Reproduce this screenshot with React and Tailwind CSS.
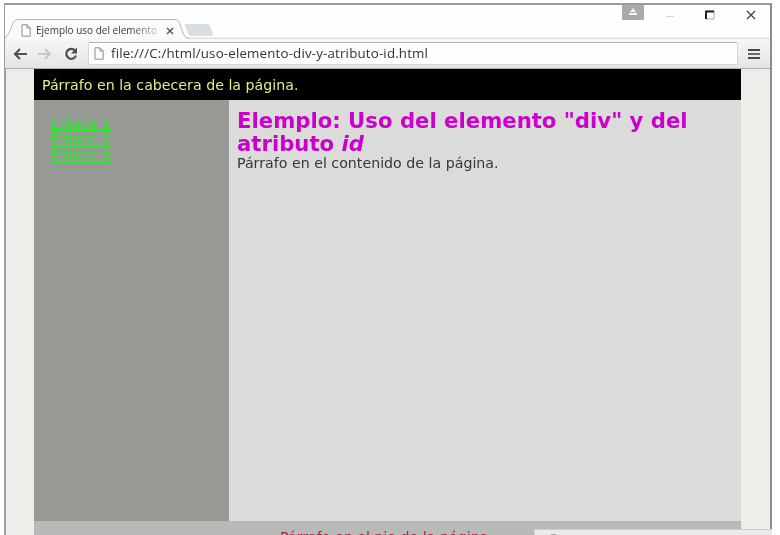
const verdana = "font-['DejaVu_Sans',Verdana,sans-serif]";

function PageIcon({ className }) {
  return (
    <svg viewBox="0 0 10 13" className={className} fill="#fdfdfd" stroke="#8b8d8c" strokeWidth="1">
      <path d="M1 .8H6L9.2 4V12.2H1Z M6 .8V4H9.2" />
    </svg>
  );
}

function TabStrip() {
  return (
    <div className="relative h-[34px] shrink-0 bg-[#fefefe]">
      <svg className="absolute left-0 top-0 h-[34px] w-[765px]" viewBox="0 0 765 34" fill="none">
        <path d="M179 19H202Q204 19 205 21L208 29Q208 31 206 31H187Q184 31 183 28Z" fill="#d9dee2" />
        <path d="M0 33.5H765" stroke="#dcdedd" strokeWidth="2" />
        <path d="M0 34Q3 33 4 30L8.500 18Q9.500 14.500 13 14.500H170Q173 14.500 174 17L179 30Q180 33 184 34Z" fill="#fafafa" />
        <path d="M0 32Q3 31 4 28L8.500 17Q9.500 14.500 13 14.500H170Q173 14.500 174 17L179 30Q180 33 184 33.500" stroke="#b9bbbb" />
      </svg>
      <div className="relative flex h-full items-start">
        <div className="flex w-[617px] pt-[19px] pl-[16px]">
          <PageIcon className="h-[13px] w-[10px] shrink-0" />
          <div className="ml-[5px] h-[14px] w-[124px] whitespace-nowrap bg-linear-to-r from-[#303344] from-75% to-[#d5d5dc] bg-clip-text font-['Open_Sans',sans-serif] text-[10px] leading-[13px] text-transparent">
            Ejemplo uso del elemento
          </div>
          <svg className="ml-[6px] mt-[3px] size-[8px]" viewBox="0 0 8 8" stroke="#555" strokeWidth="1.400">
            <path d="M1 1L7 7M7 1L1 7" />
          </svg>
        </div>
        <div className="flex h-[15px] w-[22px] items-start justify-center bg-[#a9abaa] pt-[2px]">
          <svg className="h-[9px] w-[10px]" viewBox="0 0 10 9" fill="#f6f6f6">
            <path d="M5 1L8 5H2ZM1 6H9V8H1Z" />
          </svg>
        </div>
        <div className="ml-[22px] mt-[11px] h-px w-[8px] bg-[#d5d5d5]" />
        <svg className="ml-[31px] mt-[5px] size-[10px]" viewBox="0 0 10 10" fill="none">
          <path d="M1 9V1H9V9Z" stroke="#aaa" strokeWidth="1" />
          <path d="M1 9V1.500H9" stroke="#222" strokeWidth="2" />
        </svg>
        <svg className="ml-[31px] mt-[5px] size-[10px]" viewBox="0 0 10 10" stroke="#444" strokeWidth="1.300">
          <path d="M1 1L9 9M9 1L1 9" />
        </svg>
      </div>
    </div>
  );
}

function Toolbar() {
  return (
    <div className="flex h-[30px] shrink-0 items-start border-b border-[#aab0b2] bg-linear-to-b from-[#f7f7f7] to-[#e3e5e4] pl-[8px] pt-[3px]">
      <svg className="mt-[6px] h-[12px] w-[14px]" viewBox="0 0 14 12" fill="none" stroke="#505352" strokeWidth="2.200">
        <path d="M14 6H2M7 1L2 6L7 11" />
      </svg>
      <svg className="ml-[11px] mt-[6px] h-[12px] w-[14px]" viewBox="0 0 14 12" fill="none" stroke="#c6c8c7" strokeWidth="2">
        <path d="M0 6H12M7 1L12 6L7 11" />
      </svg>
      <svg className="ml-[12px] mt-[5px] size-[14px]" viewBox="0 0 14 14" fill="none">
        <path d="M11 3.500A5 5 0 1 0 12 8.500" stroke="#4b4e4d" strokeWidth="2.200" />
        <path d="M13 0.500V6.500H7Z" fill="#4b4e4d" />
      </svg>
      <div className="ml-[10px] flex h-[23px] w-[650px] items-center rounded-[2px] border border-[#d6d8d8] border-t-[#b5b7b7] bg-[#fefefe] pl-[5px]">
        <PageIcon className="h-[13px] w-[10px] shrink-0" />
        <span className="ml-[7px] origin-left scale-x-[1.065] whitespace-nowrap font-['Open_Sans',sans-serif] text-[12.5px] leading-[18px] tracking-[0.16px] text-[#30313e]">
          file:///C:/html/uso-elemento-div-y-atributo-id.html
        </span>
      </div>
      <div className="ml-[10px] mt-[7px] flex w-[12px] flex-col gap-[2px]">
        <span className="h-[2px] bg-[#454847]" />
        <span className="h-[2px] bg-[#656867]" />
        <span className="h-[2px] bg-[#454847]" />
      </div>
    </div>
  );
}

export default function App() {
  return (
    <div className={`h-[535px] w-[780px] overflow-hidden bg-white pl-[4px] pt-[3px] ${verdana}`}>
      <div className="relative flex h-[560px] w-[768px] flex-col border-2 border-b-0 border-l-[#9b9d9c] border-r-[#8c8e8d] border-t-[#9b9d9c] bg-[#eceeea]">
        <div className="-ml-px flex flex-col">
          <TabStrip />
          <Toolbar />
        </div>
        <div className="ml-[28px] flex w-[707px] flex-1 flex-col text-[13.400px] leading-[15px]">
          <header className="flex h-[31px] shrink-0 bg-black pl-[8px] pt-[9px] text-[#e7eb86]">
            <span className="origin-left scale-x-[1.06] whitespace-nowrap">Párrafo en la cabecera de la página.</span>
          </header>
          <div className="flex h-[421px] shrink-0">
            <nav className="flex w-[195px] flex-col items-start bg-[#979995] pl-[17px] pt-[17px] leading-[15.300px] text-[#20f020]">
              <a className="origin-left scale-x-[1.04] underline decoration-[1.5px] underline-offset-1 [text-decoration-skip-ink:none]">Enlace 1</a>
              <a className="origin-left scale-x-[1.04] underline decoration-[1.5px] underline-offset-1 [text-decoration-skip-ink:none]">Enlace 2</a>
              <a className="origin-left scale-x-[1.04] underline decoration-[1.5px] underline-offset-1 [text-decoration-skip-ink:none]">Enlace 3</a>
            </nav>
            <main className="flex-1 bg-[#dbdbda] pl-[8px] pt-[10px] text-[#35363c]">
              <h1 className="origin-left scale-x-[1.04] whitespace-nowrap text-[20.400px] font-bold leading-[23px] text-[#cc00cc]">
                Elemplo: Uso del elemento "div" y del<br />atributo <em>id</em>
              </h1>
              <p className="origin-left scale-x-[1.06]">Párrafo en el contenido de la página.</p>
            </main>
          </div>
          <footer className="flex flex-1 bg-[#b8bab7] pl-[246px] pt-[9px] text-[#b51e3c]">
            <span className="origin-left scale-x-[1.06] whitespace-nowrap">Párrafo en el pie de la página.</span>
          </footer>
        </div>
        <div className="absolute left-[528px] top-[524px] h-[30px] w-[238px] border-l border-t border-[#d0d1cf] bg-[#ebebe9]">
          <div className="ml-[15px] mt-[4px] h-[2px] w-[7px] rounded-t-full bg-[#aaaaa8]" />
        </div>
      </div>
    </div>
  );
}
